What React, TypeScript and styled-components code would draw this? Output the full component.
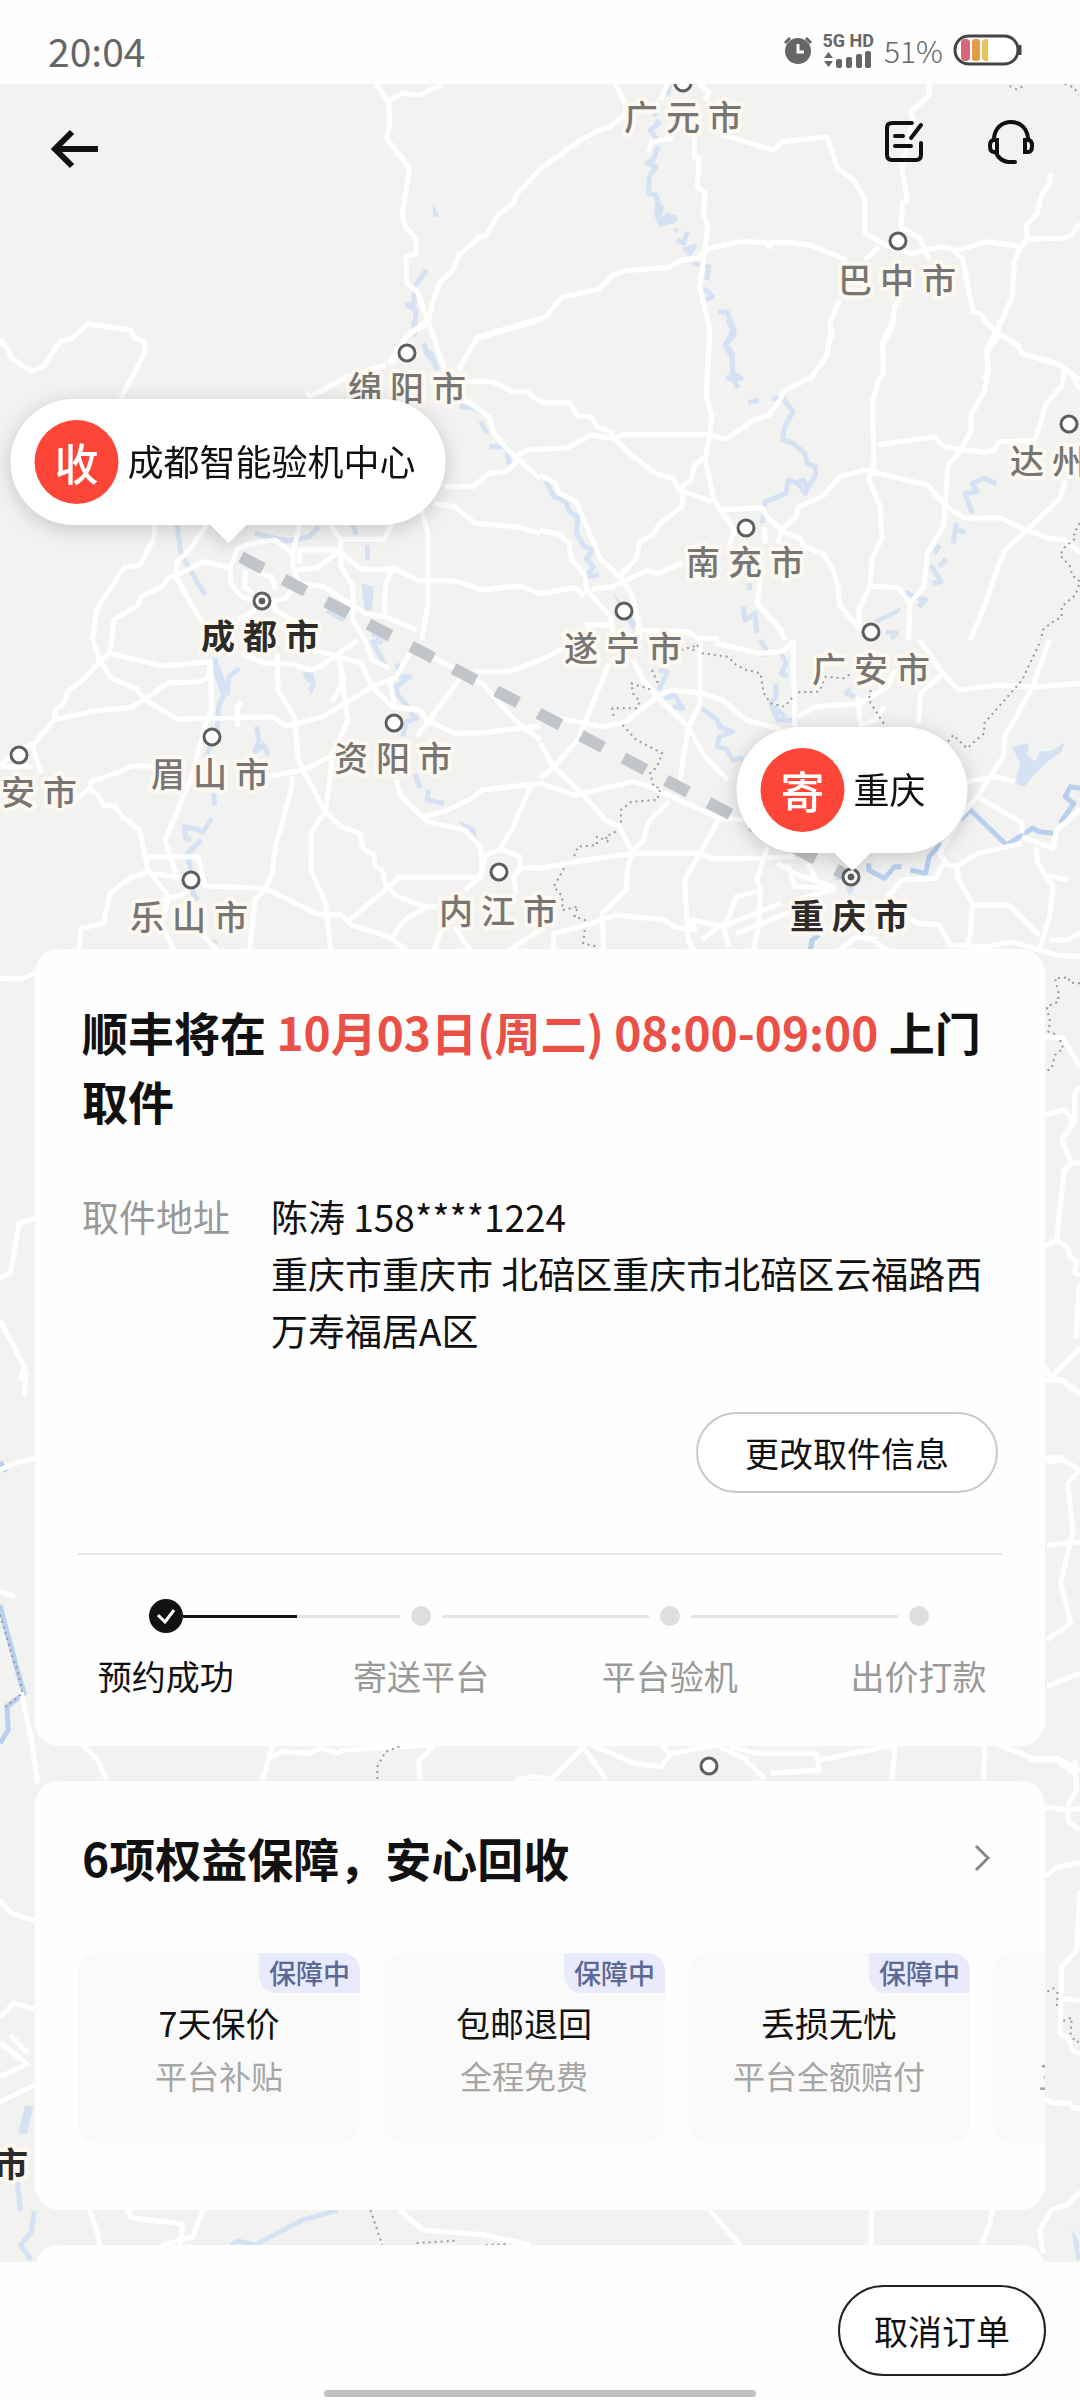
import React from 'react';
import styled, { createGlobalStyle } from 'styled-components';

const GlobalStyle = createGlobalStyle`
  *, *::before, *::after { box-sizing: border-box; }
  body {
    margin: 0;
    background: #fff;
    color: #111;
    font-family: "Noto Sans CJK SC", "Noto Sans", sans-serif;
    font-size: 34px;
    font-weight: 400;
  }
  h1, h2, p, ul, ol, dl, dd { margin: 0; padding: 0; }
  ul, ol { list-style: none; }
  button { font: inherit; color: inherit; background: none; border: 0; padding: 0; cursor: pointer; }
`;

/* ---------- page frame ---------- */

const Page = styled.div`
  display: flex;
  flex-direction: column;
  height: 100vh;
  overflow: hidden;
`;

const StatusBar = styled.header`
  display: flex;
  align-items: center;
  justify-content: space-between;
  flex: none;
  height: 84px;
  padding: 16px 57px 0 48px;
  background: #fefefe;
  color: #666;
`;

const Clock = styled.time`
  font-size: 39px;
  line-height: 40px;
`;

const StatusIcons = styled.div`
  display: flex;
  align-items: center;
  gap: 10px;
`;

const Network = styled.div`
  display: flex;
  flex-direction: column;
  gap: 2px;
  font: 700 18px/16px Roboto, sans-serif;
`;

const BatteryLevel = styled.span`
  font-size: 30px;
  font-weight: 300;
  line-height: 40px;
`;

const Stage = styled.main`
  position: relative;
  flex: 1;
  min-height: 0;
  overflow: hidden;
  background: #f2f2f1;
`;

const Content = styled.div`
  position: relative;
  display: flex;
  flex-direction: column;
  gap: 35px;
  padding: 0 35px;
  pointer-events: none;

  > * { pointer-events: auto; }
`;

const NavBar = styled.nav`
  display: flex;
  align-items: flex-start;
  gap: 64px;
  height: 830px;
  padding: 36px 11px 0 12px;
  pointer-events: none;
`;

const IconButton = styled.button<{ $push?: boolean }>`
  display: flex;
  margin-right: ${(p) => (p.$push ? 'auto' : '0')};
  pointer-events: auto;
`;

const Card = styled.section`
  padding: 0 43px;
  border-radius: 24px;
  background: #fefefe;
`;

/* ---------- map overlays ---------- */

const MapCanvas = styled.div`
  position: absolute;
  inset: 0 0 auto 0;
  aspect-ratio: 1080 / 2178;

  > svg { display: block; width: 100%; height: 100%; }
`;

const CityLabel = styled.text<{ $major?: boolean }>`
  fill: ${(p) => (p.$major ? '#2d2b29' : '#787674')};
  stroke: #fdf9f1;
  stroke-width: 8px;
  stroke-linejoin: round;
  paint-order: stroke;
  font-size: 34px;
  font-weight: ${(p) => (p.$major ? 700 : 500)};
  letter-spacing: 8px;
`;

const Bubble = styled.div`
  position: absolute;
  display: flex;
  align-items: center;
  gap: 9px;
  min-width: 231px;
  height: 126px;
  padding: 0 30px 0 24px;
  border-radius: 63px;
  background: #fff;
  font-size: 36px;
  white-space: nowrap;
  transform: translate(-50%, -100%);
  filter: drop-shadow(0 4px 10px rgba(0, 0, 0, 0.18));

  &::after {
    content: '';
    position: absolute;
    top: 100%;
    left: 50%;
    border: 18px solid transparent;
    border-top-color: #fff;
    border-bottom: 0;
    transform: translateX(-50%);
  }
`;

const BubbleMark = styled.span`
  display: grid;
  place-items: center;
  width: 84px;
  height: 84px;
  border-radius: 50%;
  background: #fe4638;
  color: #fff;
  font-size: 44px;
  font-weight: 500;
  line-height: 60px;
`;

const BubbleName = styled.span`
  padding-bottom: 4px;
  line-height: 52px;
`;

/* ---------- pickup card ---------- */

const PickupTitle = styled.h1`
  padding: 48px 4px 0;
  font-size: 46px;
  font-weight: 700;
  line-height: 69px;
`;

const Highlight = styled.span`
  color: #ea5045;
`;

const Address = styled.dl`
  display: flex;
  gap: 41px;
  padding: 53px 4px 0;
  font-size: 37px;
  line-height: 57px;
`;

const AddressLabel = styled.dt`
  flex: none;
  color: #999;
`;

const AddressText = styled.dd`
  flex: 1;
`;

const ActionRow = styled.div`
  display: flex;
  justify-content: flex-end;
  padding: 53px 4px 60px;
  border-bottom: 2px solid #e8e8e8;
`;

const PillButton = styled.button<{ $strong?: boolean }>`
  height: ${(p) => (p.$strong ? '91px' : '81px')};
  padding: 0 ${(p) => (p.$strong ? '34px' : '47px')};
  border: 2px solid ${(p) => (p.$strong ? '#222' : '#cacaca')};
  border-radius: 46px;
  background: #fff;
  line-height: 52px;
`;

const Steps = styled.ol`
  display: grid;
  grid-template-columns: 262fr 249fr 249fr 249fr;
  margin: 0 -41px 0 -43px;
  padding: 44px 0;
`;

const Step = styled.li<{ $done?: boolean }>`
  display: flex;
  flex-direction: column;
  gap: 17px;
  color: ${(p) => (p.$done ? '#111' : '#999')};
  line-height: 52px;
  text-align: center;
`;

const Track = styled.div`
  display: flex;
  align-items: center;
  height: 34px;
`;

const Segment = styled.span<{ $tone: string }>`
  flex: 1;
  height: 3px;
  background: ${(p) => p.$tone};
`;

const StepDot = styled.span`
  width: 20px;
  height: 20px;
  margin: 0 11px;
  border-radius: 50%;
  background: #dedede;
`;

/* ---------- benefits card ---------- */

const BenefitHeader = styled.div`
  display: flex;
  align-items: center;
  justify-content: space-between;
  padding: 42px 11px 61px 4px;
`;

const BenefitTitle = styled.h2`
  font-size: 46px;
  font-weight: 700;
  line-height: 69px;
`;

const BenefitList = styled.ul`
  display: flex;
  gap: 23px;
  margin-right: -43px;
  padding-bottom: 67px;
  overflow: hidden;
`;

const Benefit = styled.li`
  display: flex;
  flex-direction: column;
  align-items: center;
  flex: 0 0 282px;
  height: 190px;
  border-radius: 18px;
  background: #fafafa;
  line-height: 53px;
`;

const BenefitTag = styled.span`
  align-self: flex-end;
  padding: 0 10px;
  margin-bottom: 3px;
  border-radius: 0 18px 0 18px;
  background: #e9eafc;
  color: #5b6996;
  font-size: 27px;
  font-weight: 500;
  line-height: 40px;
`;

const BenefitNote = styled.span`
  color: #a6a6a6;
  font-size: 32px;
`;

const NextCard = styled(Card)`
  height: 120px;
`;

/* ---------- bottom bar ---------- */

const BottomBar = styled.footer`
  display: flex;
  flex-direction: column;
  align-items: flex-end;
  gap: 14px;
  flex: none;
  height: 138px;
  padding: 23px 34px 0;
  background: #fefefe;
`;

const HomeIndicator = styled.div`
  align-self: center;
  width: 40vw;
  height: 7px;
  border-radius: 4px;
  background: #c0c0c0;
`;

/* ---------- map data ---------- */

type Tile = {
  x: number;
  y: number;
  sx: number;
  sy: number;
  roads: string;
  water?: string;
  lakes?: string;
  river?: string;
  borders?: string;
};

const tiles: Tile[] = [
  {
    x: 360, y: 80, sx: 2.178, sy: 3,
    roads:
      'M35 12L62 65 66 125 58 175 108 265 92 400 98 440 122 475 122 520 100 530 102 610 125 635 150 730 185 870M55 65L95 40 130 45 160 25 180 15M555 12L575 60 580 100 545 140 520 150 475 185 395 265 340 345 335 370 300 405 275 468 262 470 215 525 200 575 175 605 160 660 148 730 100 770 70 850M670 12L655 60M740 12L760 40 750 60M728 170L728 230 738 235 735 320 752 340 748 400 758 440 740 620 762 750 755 900M790 165L900 210 920 185 1018 170 1040 265 1075 300 1100 360 1100 460 1150 500M1240 12L1240 45 1200 95 1205 120 1180 260 1192 360 1182 370 1178 440 1220 475 1240 540M1505 280L1502 310 1485 345 1475 400 1450 440 1455 475 1435 510 1425 550 1420 650 1400 715 1365 810 1368 870 1358 900M1568 430L1550 465 1530 475 1455 478M1435 498L1365 485 1300 512 1270 500 1200 520 1150 500M1285 505L1312 535 1335 695 1350 700 1375 745 1435 800 1440 820 1525 855 1568 900M1130 500L1100 540M1060 540L980 495 930 487 895 487 893 500 880 487 830 485 760 505 735 535 700 540 675 562 580 572 550 585 520 628 440 652 405 710 255 772 215 870M1045 660L1025 720 1025 775 1015 830 980 900M1180 640L1165 680 1160 740 1138 795 1140 880 1130 900M683 175L635 185 628 215',
    water:
      'M675 15L670 45M640 95L645 110M645 120L650 130 632 150 645 175 640 185M650 200L638 240 625 250 645 260 630 290 628 340 645 345 650 370 645 400 655 430 670 405 685 420 683 405M685 445L690 455M712 455L705 490 690 480M705 510L728 500 715 525M725 550L760 560 755 600M748 625L768 650 750 660M780 695L800 697 815 750 812 770 795 795 810 830 812 880 830 895 800 895M145 570L118 620 118 670 103 675 122 690 118 770M140 790L145 820 155 820 165 860',
    lakes: 'M158 370L173 412 160 410ZM640 350L662 380 655 430 672 410 685 430 650 440Z',
    borders: 'M1415 18L1430 28 1450 15M1535 12L1555 22 1565 45',
  },
  {
    x: 0, y: 320, sx: 2.904, sy: 3,
    roads:
      'M0 60L25 90 30 110 90 155 125 140 175 65 210 55 255 12 380 30 390 55 420 65 420 100 350 235M1240 0L1180 50 1130 130M1120 135L1010 170 900 230 890 215M1331 150L1385 55 1568 0M1350 185L1430 185 1490 215 1530 215 1568 245M1350 240L1420 290 1435 340 1470 385 1500 415 1530 440 1568 475M1500 425L1470 455 1420 460 1375 500 1290 500M1500 410L1535 388 1568 388M1260 550L1320 560 1380 610 1500 620 1568 640M450 615L445 660 405 735 360 742 280 870 268 960M325 960L330 900 400 855 410 830 470 800 490 772 510 768 590 725 665 742M510 768L515 725 550 690 600 615M510 768L590 915 610 960M670 740L690 685 730 670 800 660 850 700 850 740 865 780 830 835 760 850 700 830 670 790 670 730M870 615L850 700M960 615L990 660 990 740 1025 800 1025 900 1060 960M990 658L1115 658 1140 610M850 750L920 745 990 690M870 730L870 690 980 690 1050 748 1150 748 1215 782 1320 782 1400 810 1510 798 1568 820M1220 560L1243 640 1243 850 1225 960M1145 735L1120 790 1115 880M790 840L800 870 860 910 900 960M760 850L740 870 690 900M870 790L940 800 1000 840 1060 880 1120 890 1210 930M715 750L710 800 735 820M750 760L790 770 800 810',
    water:
      'M515 615L525 700 595 825M740 640L835 663 900 650 925 620M1025 615L1035 645M1067 675L1067 720M1230 70L1245 110 1260 120 1270 150M1335 258L1375 265 1405 280M1395 305L1415 340M1420 380L1470 380 1480 435M1200 0L1205 40M950 870L1000 900M1080 940L1130 960',
    lakes: 'M1050 790L1085 800 1080 870 1060 880Z',
  },
  {
    x: 540, y: 320, sx: 2.904, sy: 3,
    roads:
      'M0 248L85 248 110 288 150 290 165 320 205 335 215 355 260 400 335 460 385 475 405 510 500 545M0 388L80 383 150 345 210 355 245 343 490 343 540 358 620 300 665 285 700 235 705 215 790 170 835 105 838 60 850 45 840 0M488 0L493 50 483 230 500 290 480 420 505 540 525 572 565 630 555 660 550 680M475 410L448 440 440 475 415 500 412 560 350 610 325 645 290 665 280 715 235 765M525 570L645 563 660 590 705 635 755 655 765 680 820 700 850 745 865 800 870 855 930 930M690 670L705 625 745 590 750 560 820 530 870 470 945 450 1125 495 1175 555 1235 595 1335 593 1400 625 1480 655 1525 660 1568 700M1025 0L995 70 998 160 985 175 965 245 970 430 955 480 988 560 992 655 965 715 958 800 925 870 930 930M980 375L1145 350 1175 382 1290 397 1320 390 1335 365 1440 362M1290 0L1330 40 1385 75 1400 100 1500 130 1545 165 1568 210M1335 0L1330 50 1298 95 1302 160 1290 215 1252 285 1252 330 1220 395 1185 435 1172 620 1125 700 1115 800 1075 850 1070 960M958 798L1040 803 1075 850M1525 150L1515 200 1470 250 1440 355M1525 480L1510 535 1410 635 1350 690 1320 770 1290 860 1250 960M0 465L45 490 55 520 105 545 175 715 230 770 265 820 285 900 290 960M0 630L60 645 85 670 90 715 130 765 135 810 205 890 215 960M0 822L100 803 130 828M150 808L210 800 310 752 345 760 415 728M130 915L210 915M640 780L630 850 700 930 710 960M290 930L430 935 460 955 520 955M650 620L655 670',
    water:
      'M15 480L40 530 75 545 85 575 110 590 105 640 130 680 155 690 135 715 155 740 135 770 170 765M545 0L560 30 540 75 558 100 560 170 575 205M540 172L575 180M605 248L635 240M675 235L710 240 735 275 710 320 705 360 735 370 770 400 775 430 800 440 800 465 780 500 770 520 750 490 720 480 715 520 655 545 650 560M740 490L765 480 780 510M650 580L645 610M610 790L608 810M590 860L595 900 625 880 630 940M1325 490L1290 475 1255 490 1270 515 1235 520 1255 580M1210 610L1200 670M1215 630L1235 638M1160 675L1145 700M1180 715L1160 740M1135 735L1165 785 1140 790M1060 815L1085 830 1120 840 1100 860M1005 935L1035 940 1020 955',
    lakes: 'M970 900L1050 860 1040 880 980 910ZM210 815L225 835 280 910 270 930 245 890Z',
    borders: 'M1568 610L1550 640 1555 655 1525 680 1510 705 1540 740 1545 765 1568 785 1555 825 1515 860 1515 890 1490 905 1460 930 1455 960',
  },
  {
    x: 0, y: 640, sx: 2.904, sy: 3,
    roads:
      'M270 0L290 65 240 120 195 155 185 190 160 210 160 235 100 310 50 330 0 378M325 0L318 40 290 65 325 115 395 145 420 178 515 238 790 230 830 258 940 230 1080 140 1150 112 1200 20M318 40L470 78 610 65 605 110 585 125 490 128 420 178 380 203 280 212 160 238M610 65L615 210 600 240 560 400 480 600 510 700M0 380L95 380M95 320L120 400M220 480L260 445 265 425 350 395 380 378 450 378M265 452L285 465 300 495 335 500 355 530 405 570 430 690 490 770M430 695L375 715 320 760 300 850 235 865 230 930M430 650L575 650 595 738 770 745 920 822 990 825 1020 855 1130 890 1180 930M435 700L520 712M475 780L530 765 555 740M490 770L470 850 505 930M560 850L630 930M700 40L770 70 850 72 900 90 930 80 1040 0M805 40L808 150 855 230 865 350 880 390 945 515 990 560 1045 580 1055 625 1085 645 1090 680 1110 690 1122 740 1155 770 1230 800 1270 800M780 410L880 390 960 350 985 300 1010 240 1000 170 985 60M850 410L845 450 800 620 790 705 770 745 740 780 725 930M945 515L905 575 903 690 945 790 960 930M900 30L950 40 1050 70 1080 140 1140 200 1220 210 1240 240 1320 280 1400 278 1568 258M1130 110L1145 190M1060 0L1080 60 1130 85M1220 30L1400 130 1490 235 1568 300M1340 110L1210 290M1380 95L1480 95 1568 60M1150 420L1165 470 1225 530 1240 545 1350 570 1395 620 1400 690M1230 530L1290 515 1370 475 1400 450 1568 430M1010 845L1160 712 1400 712M1545 430L1490 560 1450 630 1410 645 1395 710 1350 750M1460 630L1510 650 1510 690 1490 710 1500 760M1510 683L1568 683M1140 890L1175 840 1240 800M1285 860L1260 930M1320 860L1365 930M1480 930L1568 870M700 185L690 200 690 260M985 60L1000 120 965 185M945 515L965 360',
    water:
      'M625 55L630 110 650 160 635 200 630 280M632 80L660 165M695 85L665 110 660 165M610 320L597 355M745 260L752 300 740 335 765 315 780 345M615 535L590 575 560 565 535 560 540 595 555 600M585 600L545 640 555 700 560 760 575 780M620 460L623 495M1080 0L1120 80M1090 0L1110 10M1155 70L1160 110 1190 110 1150 140 1155 165 1185 200M1190 220L1210 235 1180 245 1170 290M1205 400L1220 445M1245 450L1240 480 1290 490',
    lakes: 'M878 100L905 90 918 130 905 165 895 145 905 130 890 125ZM595 890L635 905 620 925ZM1330 540L1380 565 1385 600 1360 580Z',
  },
  {
    x: 540, y: 640, sx: 2.904, sy: 3,
    roads:
      'M0 60L80 20M200 70L110 300 40 380 0 415M60 235L180 260 250 245 340 170 430 260 480 350 545 420M270 60L300 120 340 170 380 150 470 160 530 180 600 240 700 268M465 0L465 190 430 265 405 430M510 10L640 40 700 35 735 10M735 0L740 260M0 310L40 380 130 470 190 540 230 560 270 640 255 680 250 750 180 820 185 930M0 430L100 465 270 425 320 440 520 535 600 540M520 535L465 640 420 720 430 900 445 930M375 485L315 545 300 600 270 635M0 685L100 665 270 640 460 640 500 655 630 655 740 650M465 640L430 700M630 755L570 770 545 840 470 900M660 620L630 720 640 750 635 860 620 930M40 930L40 880 150 850 220 825 360 840 390 860 450 870 440 840 530 860 700 790M570 880L740 810M530 850L550 920M1100 0L1130 40 1170 100 1105 160 1100 250M1170 100L1215 150 1330 135 1430 142 1568 130M750 230L800 200 930 190 1010 140 1030 90M925 170L930 255 975 240 1000 200M1480 0L1430 142 1350 290 1345 350 1270 470 1220 530 1160 640 1180 670M1240 425L1320 410 1380 425M1270 470L1400 550 1400 580M1400 610L1270 640 1210 680 1170 670M1400 590L1490 625 1500 570 1568 510M1210 680L1215 720 1255 790 1250 880 1235 930M1440 620L1445 670 1490 740 1480 830 1450 930M1255 795L1360 795 1450 885M1480 900L1530 900 1568 880M1470 705L1535 720M1060 830L1100 850 1160 855 1190 915 1300 920 1370 905 1450 930 1500 945 1568 950M1010 770L1050 720 1150 715 1170 670M720 670L740 740 860 745M780 670L800 720M740 780L850 750M950 890L1010 930M870 930L920 890 980 900M690 670L740 700 860 745',
    water:
      'M345 90L370 95 345 150M360 175L390 165 415 205 385 200M470 205L515 240 520 260 560 275 520 290 515 320 540 325 560 360 590 355M640 0L655 25 650 50M700 40L715 70 700 100 720 110M685 130L685 170 670 190 690 240 735 240M680 200L710 230M900 145L890 160 915 170',
    lakes: 'M1370 320L1420 310 1415 345 1440 365 1450 335 1490 330 1525 305 1515 335 1480 360 1440 400 1405 440 1380 430 1395 370ZM885 740L915 740 900 770ZM860 690L880 680 875 720 855 720Z',
    river:
      'M1220 540L1250 510 1355 615 1400 585 1430 565 1450 575 1490 580M1510 550L1550 490 1525 470 1540 440 1568 445M1165 610L1130 650 1120 700 1075 690M1050 680L1030 680 1000 715 955 690 955 670M785 930L790 900 810 885',
    borders:
      'M410 30L460 15 440 35M470 40L545 50 570 75 600 90 640 100 650 160 670 190 710 200 735 170M750 157L810 155 830 110 880 115 905 100M960 150L955 180 985 230 1005 260M325 90L345 135M320 148L265 130 270 160 290 185 280 205 210 205 215 235M240 255L280 300 355 340 340 380 320 400 330 440 350 445 340 480 265 485 235 510 235 550M220 575L190 590 200 605 165 590 165 615 110 620 95 660M70 685L40 740 65 770 65 810 110 800 100 830 145 845M130 870L125 910 165 920M1185 305L1200 285 1240 325 1290 280 1290 250 1400 120 1455 0',
  },
  {
    x: 0, y: 940, sx: 1.452, sy: 3,
    roads: 'M0 115L30 118 55 95M50 835L28 850 15 1000 0 1015M0 1140L35 1280 30 1320',
  },
  {
    x: 1000, y: 960, sx: 3, sy: 3,
    roads:
      'M135 230L190 235 240 320M135 465L195 448 220 490 185 540 215 610 240 608M240 380L225 400 222 490M215 612L192 630 170 840 205 865 210 890 230 905 225 940 240 945M135 858L170 840M238 970L228 1135M135 1215L150 1255 240 1165M135 1262L190 1262 240 1300M135 1495L190 1490',
    borders: 'M240 70L210 68 205 52 165 55 175 95 175 125 140 140 150 185 145 215 165 222M180 240L190 265 165 285 155 325 135 335',
  },
  {
    x: 0, y: 1370, sx: 1.452, sy: 3,
    roads:
      'M38 0L35 80M0 300L20 280 50 265M0 665L22 680M30 960L45 1100 55 1240M1520 25L1540 30 1568 75M1520 275L1545 270 1568 300 1550 340 1558 480 1540 640 1555 760 1520 810M1520 525L1568 515M1520 950L1568 910M120 1125L140 1165 155 1228M395 1125L390 1170 380 1228M390 1165L410 1145 450 1150 465 1135 490 1150 500 1140 580 1130 630 1125 608 1175 610 1228M850 1125L800 1228M850 1140L880 1228M860 1125L920 1180 960 1190 975 1150 1040 1125 1080 1165 1110 1225M960 1125L975 1155M1060 1130L1100 1150 1185 1150 1190 1200 1120 1210M1190 1170L1300 1125 1295 1228M1430 1125L1428 1228M1450 1125L1500 1165 1535 1165 1568 1200M750 1228L775 1220 800 1228',
    river: 'M0 705L8 770 20 860 25 900 35 970 10 1010 12 1080 0 1120M0 275L8 305',
    borders: 'M580 1130L560 1145 548 1190 548 1228M0 735L18 860 25 900 33 970 8 1010',
  },
  {
    x: 0, y: 1740, sx: 1.452, sy: 2.376,
    roads:
      'M0 380L15 410 50 430M0 660L20 625 50 640M0 720L40 770 0 800M15 700L40 745M0 860L50 820M130 1117L140 1160 145 1200M185 1117L190 1135 265 1150 262 1200M295 1117L280 1180 235 1200M580 1117L615 1165 700 1175 770 1200M1030 1117L1075 1200M1265 1117L1265 1200',
    water: 'M490 1117L440 1140 370 1200 345 1190 335 1200M25 1050L30 1120M50 1120L45 1170 30 1200 45 1235M45 870L35 935M40 870L30 935',
    borders: 'M538 1117L555 1200M605 1195L660 1190M705 1200L735 1198',
  },
  {
    x: 960, y: 1760, sx: 3, sy: 3,
    roads:
      'M205 0L290 0 345 40 350 90 325 130 325 185 360 210M345 0L350 90M255 140L320 150 360 145M255 350L290 322 360 308M360 390L350 570 305 620 300 820 325 835 340 875 360 880M305 715L360 722M255 1015L275 1028 330 1030 340 1045 360 1045M95 1350L90 1390 65 1450M360 1295L320 1335 275 1348 238 1410 250 1480',
    lakes: 'M333 1405L355 1440 360 1500 350 1500Z',
    borders: 'M262 695L280 685 293 700 290 745M310 783L335 773 332 820 345 845 360 845',
  },
];

type City = { name: string; x: number; y: number; dot?: [number, number]; major?: boolean };

const cities: City[] = [
  { name: '广元市', x: 624, y: 130, dot: [683, 83] },
  { name: '巴中市', x: 838, y: 293, dot: [898, 241] },
  { name: '绵阳市', x: 348, y: 401, dot: [407, 353] },
  { name: '成都市', x: 201, y: 649, dot: [262, 601], major: true },
  { name: '南充市', x: 686, y: 575, dot: [746, 528] },
  { name: '达州市', x: 1010, y: 474, dot: [1069, 424] },
  { name: '遂宁市', x: 564, y: 661, dot: [624, 611] },
  { name: '广安市', x: 812, y: 682, dot: [871, 632] },
  { name: '雅安市', x: -41, y: 805, dot: [19, 755] },
  { name: '眉山市', x: 151, y: 787, dot: [212, 737] },
  { name: '资阳市', x: 334, y: 771, dot: [394, 723] },
  { name: '乐山市', x: 130, y: 930, dot: [191, 880] },
  { name: '内江市', x: 439, y: 924, dot: [499, 872] },
  { name: '重庆市', x: 790, y: 929, dot: [851, 877], major: true },
  { name: '市', x: -6, y: 2177, major: true },
];

const MAP_TOP = 84;
const MAP_HEIGHT = 2178;

const MapDrawing = () => (
  <svg viewBox={`0 ${MAP_TOP} 1080 ${MAP_HEIGHT}`} preserveAspectRatio="none">
    <rect x="0" y={MAP_TOP} width="1080" height={MAP_HEIGHT} fill="#f2f2f1" />
    {tiles.map((t) => (
      <g
        key={`${t.x}-${t.y}`}
        transform={`translate(${t.x} ${t.y}) scale(${1 / t.sx} ${1 / t.sy})`}
        fill="none"
        strokeLinejoin="round"
      >
        {t.lakes && <path d={t.lakes} fill="#d5e2f3" />}
        {t.water && <path d={t.water} stroke="#d5e2f3" strokeWidth="5" vectorEffect="non-scaling-stroke" />}
        {t.river && <path d={t.river} stroke="#b9cff0" strokeWidth="5" vectorEffect="non-scaling-stroke" />}
        <path d={t.roads} stroke="#fff" strokeWidth="5" vectorEffect="non-scaling-stroke" />
        {t.borders && (
          <path
            d={t.borders}
            stroke="#999"
            strokeWidth="2"
            strokeDasharray="2 4"
            vectorEffect="non-scaling-stroke"
          />
        )}
      </g>
    ))}
    {cities.map((c) => (
      <CityLabel key={c.name} x={c.x} y={c.y} $major={c.major}>
        {c.name}
      </CityLabel>
    ))}
    <path d="M241 557L850 877" stroke="#c1c5c9" strokeWidth="12" strokeDasharray="25 23" />
    {cities.map(
      (c) =>
        c.dot && (
          <g key={c.name} stroke="#5e5e5e" fill="#fff">
            <circle cx={c.dot[0]} cy={c.dot[1]} r="8" strokeWidth="3" />
            {c.major && <circle cx={c.dot[0]} cy={c.dot[1]} r="3" fill="#5e5e5e" />}
          </g>
        ),
    )}
    <circle cx="709" cy="1766" r="8" fill="#fff" stroke="#5e5e5e" strokeWidth="3" />
  </svg>
);

const places = [
  { mark: '收', name: '成都智能验机中心', x: 228, y: 525 },
  { mark: '寄', name: '重庆', x: 852, y: 853 },
];

/* ---------- icons ---------- */

const AlarmIcon = () => (
  <svg width="30" height="30" viewBox="0 0 30 30" aria-hidden="true">
    <circle cx="15" cy="16" r="13" fill="#666" />
    <path d="M2 8L7 3M28 8L23 3" stroke="#666" strokeWidth="3" />
    <path d="M15 9v8h6" fill="none" stroke="#fff" strokeWidth="3" />
  </svg>
);

const SignalIcon = () => (
  <svg width="49" height="17" viewBox="0 0 49 17" fill="#666" aria-hidden="true">
    <path d="M1 7L5.500 1 10 7ZM1 10L5.500 16 10 10Z" />
    <rect x="13" y="8" width="6" height="9" rx="2" />
    <rect x="23" y="6" width="6" height="11" rx="2" />
    <rect x="33" y="3" width="6" height="14" rx="2" />
    <rect x="42" y="0" width="6" height="17" rx="2" />
  </svg>
);

const BatteryIcon = () => (
  <svg width="70" height="32" viewBox="0 0 70 32" aria-hidden="true">
    <path d="M16 2h35c8 0 14 6 14 14s-6 14-14 14H16C8 30 2 24 2 16S8 2 16 2z" fill="#fff" stroke="#444" strokeWidth="3" />
    <path d="M67 11v10" stroke="#444" strokeWidth="3" />
    <rect x="8" y="5" width="9" height="22" rx="4" fill="#d7667b" />
    <rect x="19" y="5" width="8" height="22" rx="3" fill="#e59b43" />
    <path d="M35 5v22h-2q-4 0-4-4V9q0-4 4-4z" fill="#e8c35c" />
  </svg>
);

const BackIcon = () => (
  <svg width="52" height="58" viewBox="0 0 52 58" fill="none" stroke="#111" strokeWidth="6" aria-hidden="true">
    <path d="M25 12L8 29 25 46M8 29h43" />
  </svg>
);

const EditIcon = () => (
  <svg width="40" height="44" viewBox="0 0 40 44" fill="none" stroke="#111" strokeWidth="4" strokeLinecap="round" aria-hidden="true">
    <path d="M28 3H8Q3 3 3 8v27q0 5 5 5h24q5 0 5-5V23M37 5L27 18M11 16h8M11 26h16" />
  </svg>
);

const HeadsetIcon = () => (
  <svg width="46" height="44" viewBox="0 0 46 44" fill="none" stroke="#111" strokeWidth="4" strokeLinecap="round" aria-hidden="true">
    <path d="M6 19V18C7 8 14 2 23 2s16 6 17 16v1" />
    <path d="M9 20H6q-4 0-4 6t4 6h3zM37 20h3q4 0 4 6t-4 6h-3z" />
    <path d="M8 33q4 8 12 9h7" />
  </svg>
);

const CheckIcon = () => (
  <svg width="34" height="34" viewBox="0 0 34 34" fill="none" role="img" aria-label="已完成">
    <circle cx="17" cy="17" r="17" fill="#111" />
    <path d="M9 16l7 7 9-12" stroke="#fff" strokeWidth="3" />
  </svg>
);

const ChevronIcon = () => (
  <svg width="18" height="30" viewBox="0 0 18 30" fill="none" aria-hidden="true">
    <path d="M3 3l12 12L3 27" stroke="#888" strokeWidth="3" />
  </svg>
);

/* ---------- content ---------- */

const steps = ['预约成功', '寄送平台', '平台验机', '出价打款'];

const benefits = [
  { title: '7天保价', note: '平台补贴' },
  { title: '包邮退回', note: '全程免费' },
  { title: '丢损无忧', note: '平台全额赔付' },
  { title: '专业验机', note: '三方权威质检' },
];

const segmentTone = (index: number) => {
  if (index < 0 || index > steps.length * 2 - 3) return 'transparent';
  return index === 0 ? '#111' : '#e5e5e5';
};

export default function App() {
  return (
    <Page>
      <GlobalStyle />
      <StatusBar>
        <Clock>20:04</Clock>
        <StatusIcons>
          <AlarmIcon />
          <Network>
            <span>5G HD</span>
            <SignalIcon />
          </Network>
          <BatteryLevel>51%</BatteryLevel>
          <BatteryIcon />
        </StatusIcons>
      </StatusBar>

      <Stage>
        <MapCanvas>
          <MapDrawing />
          {places.map((p) => (
            <Bubble
              key={p.name}
              style={{ left: `${(p.x / 1080) * 100}%`, top: `${((p.y - MAP_TOP) / MAP_HEIGHT) * 100}%` }}
            >
              <BubbleMark>{p.mark}</BubbleMark>
              <BubbleName>{p.name}</BubbleName>
            </Bubble>
          ))}
        </MapCanvas>

        <Content>
          <NavBar>
            <IconButton $push aria-label="返回">
              <BackIcon />
            </IconButton>
            <IconButton aria-label="填写反馈">
              <EditIcon />
            </IconButton>
            <IconButton aria-label="联系客服">
              <HeadsetIcon />
            </IconButton>
          </NavBar>

          <Card>
            <PickupTitle>
              顺丰将在 <Highlight>10月03日(周二) 08:00-09:00</Highlight> 上门取件
            </PickupTitle>
            <Address>
              <AddressLabel>取件地址</AddressLabel>
              <AddressText>
                <p>陈涛 158****1224</p>
                <p>重庆市重庆市 北碚区重庆市北碚区云福路西万寿福居A区</p>
              </AddressText>
            </Address>
            <ActionRow>
              <PillButton>更改取件信息</PillButton>
            </ActionRow>
            <Steps>
              {steps.map((name, i) => (
                <Step key={name} $done={i === 0}>
                  <Track>
                    <Segment $tone={segmentTone(i * 2 - 1)} />
                    {i === 0 ? <CheckIcon /> : <StepDot />}
                    <Segment $tone={segmentTone(i * 2)} />
                  </Track>
                  {name}
                </Step>
              ))}
            </Steps>
          </Card>

          <Card>
            <BenefitHeader>
              <BenefitTitle>6项权益保障，安心回收</BenefitTitle>
              <IconButton aria-label="查看全部权益">
                <ChevronIcon />
              </IconButton>
            </BenefitHeader>
            <BenefitList>
              {benefits.map((b) => (
                <Benefit key={b.title}>
                  <BenefitTag>保障中</BenefitTag>
                  <span>{b.title}</span>
                  <BenefitNote>{b.note}</BenefitNote>
                </Benefit>
              ))}
            </BenefitList>
          </Card>

          <NextCard aria-hidden="true" />
        </Content>
      </Stage>

      <BottomBar>
        <PillButton $strong>取消订单</PillButton>
        <HomeIndicator />
      </BottomBar>
    </Page>
  );
}
